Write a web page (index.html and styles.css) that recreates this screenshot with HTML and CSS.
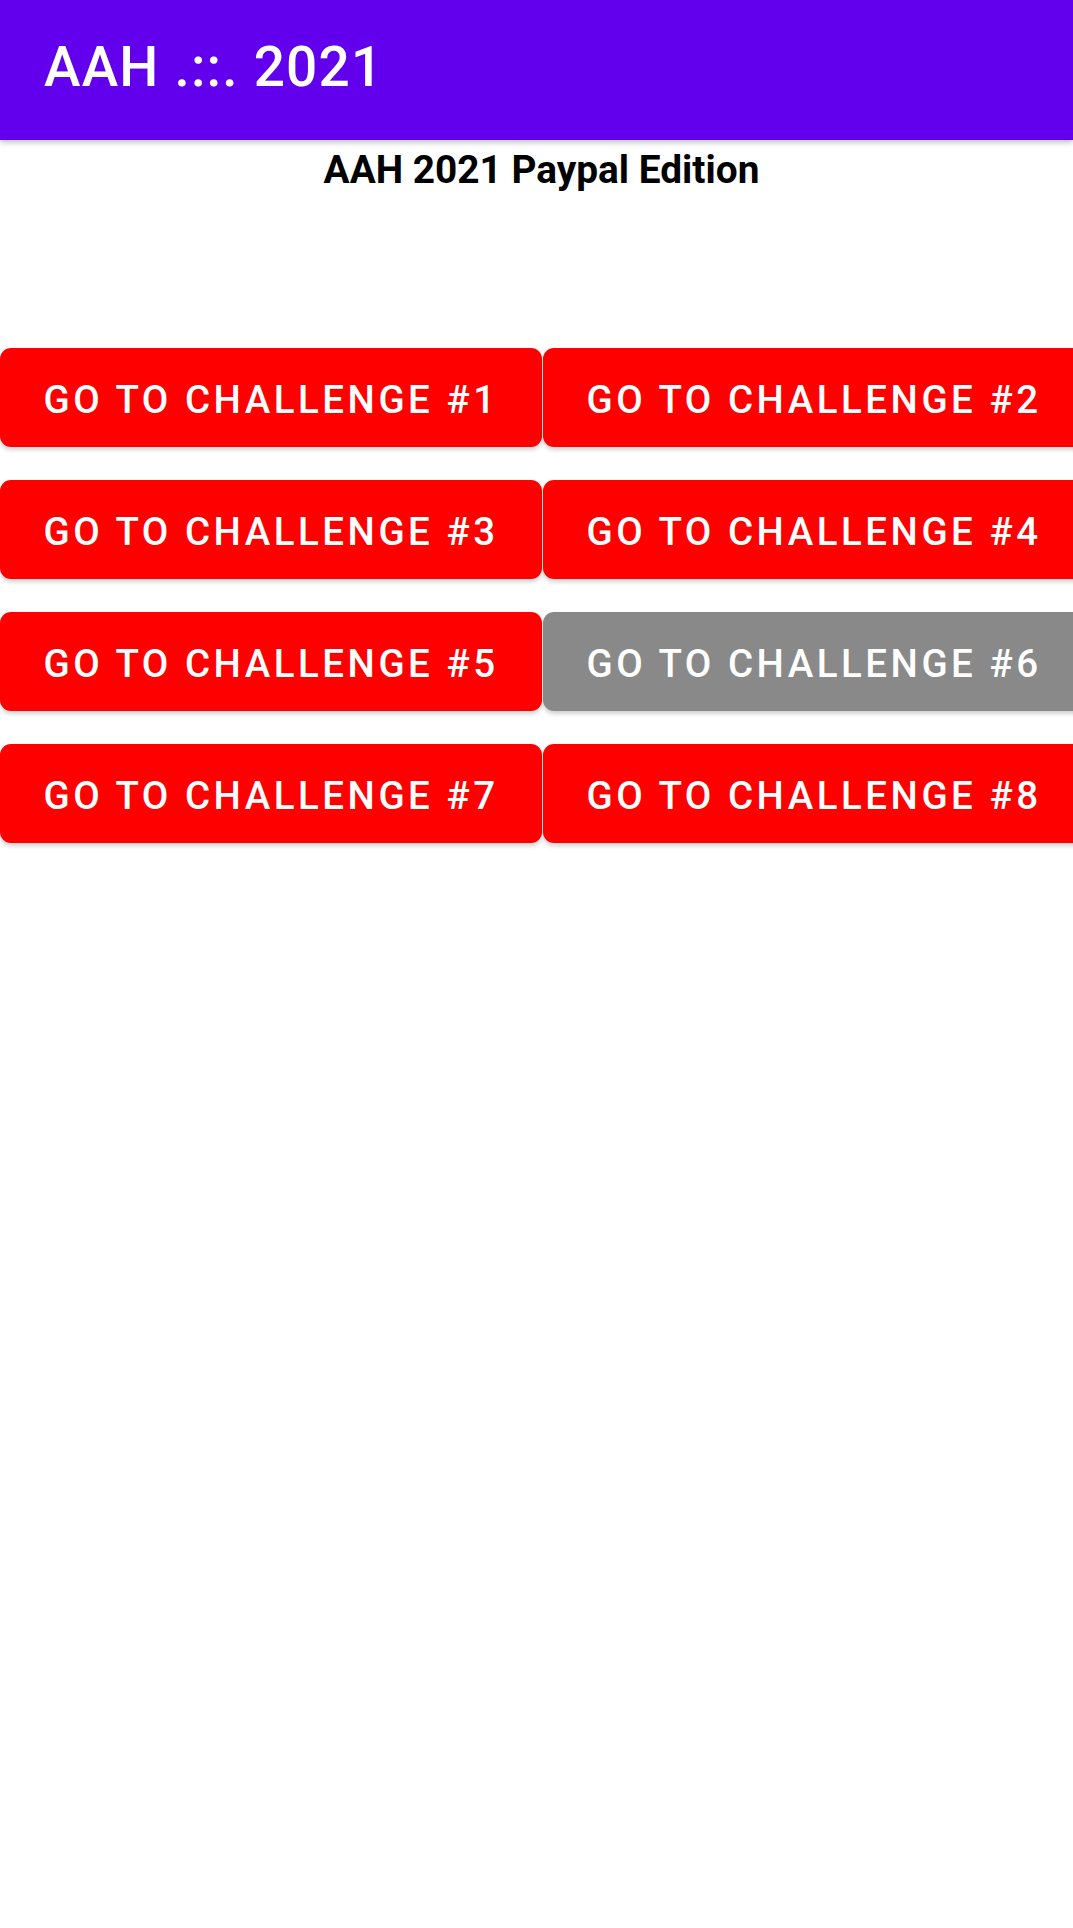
FILE: index.html
```html
<!DOCTYPE html>
<html lang="en">
<head>
<meta charset="utf-8">
<title>AAH .::. 2021</title>
<link rel="stylesheet" href="styles.css">
</head>
<body>
<header class="appbar">
  <h1 class="title">AAH .::. 2021</h1>
</header>
<main class="content">
  <p class="subtitle">AAH 2021 Paypal Edition</p>
  <div class="grid">
    <button class="btn">Go to Challenge #1</button>
    <button class="btn">Go to Challenge #2</button>
    <button class="btn">Go to Challenge #3</button>
    <button class="btn">Go to Challenge #4</button>
    <button class="btn">Go to Challenge #5</button>
    <button class="btn btn-grey">Go to Challenge #6</button>
    <button class="btn">Go to Challenge #7</button>
    <button class="btn">Go to Challenge #8</button>
  </div>
</main>
</body>
</html>
```
FILE: styles.css
```css
html, body {
  margin: 0;
  padding: 0;
  background: #ffffff;
  overflow: hidden;
}
body {
  font-family: Roboto, "Liberation Sans", sans-serif;
  width: 1073px;
  height: 1928px;
}
.appbar {
  position: relative;
  z-index: 2;
  height: 140px;
  box-sizing: border-box;
  padding: 35px 0 0 44px;
  background: #6200ee;
  box-shadow: 0 2px 6px rgba(0, 0, 0, 0.28);
}
.title {
  margin: 0;
  color: #ffffff;
  font-size: 55px;
  font-weight: 500;
  letter-spacing: 1.2px;
  line-height: normal;
}
.content {
  display: flex;
  flex-direction: column;
}
.subtitle {
  margin: 6px 0 0 0;
  padding-left: 10px;
  text-align: center;
  font-size: 38.8px;
  font-weight: 700;
  line-height: 48px;
  color: #000000;
}
.grid {
  margin-top: 154px;
  display: grid;
  grid-template-columns: 542px 542px;
  column-gap: 1px;
  row-gap: 33px;
  width: 1085px;
}
.btn {
  height: 99px;
  border: none;
  border-radius: 11px;
  background: #ff0000;
  color: #ffffff;
  font-family: Roboto, "Liberation Sans", sans-serif;
  font-size: 38.5px;
  font-weight: 500;
  letter-spacing: 3.5px;
  text-transform: uppercase;
  padding: 3px 0 0 0;
  box-shadow: 0 3px 4px rgba(0, 0, 0, 0.18);
}
.btn-grey {
  background: #898989;
}
```
